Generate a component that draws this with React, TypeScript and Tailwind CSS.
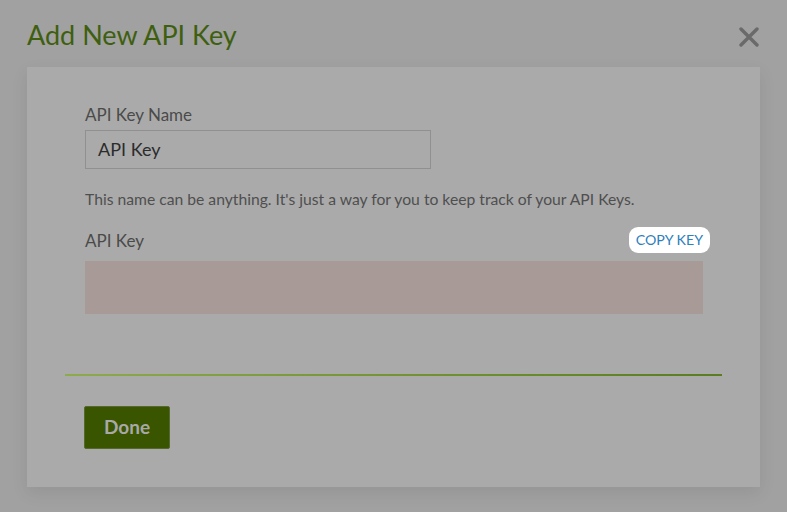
import * as React from "react";

const font = { fontFamily: "Lato, 'Open Sans', sans-serif" };

function CloseIcon() {
  return (
    <svg width="20" height="20" viewBox="0 0 20 20" className="shrink-0">
      <path
        d="M2 2 L18 18 M18 2 L2 18"
        stroke="#6a6a6a"
        strokeWidth="3.4"
        strokeLinecap="round"
      />
    </svg>
  );
}

export default function App() {
  return (
    <div
      className="w-full h-[512px] bg-[#a1a1a1] overflow-hidden pl-[27px] pr-[27px]"
      style={font}
    >
      <div className="flex items-center justify-between h-[67px]">
        <h1 className="text-[27px] leading-none text-[#3f5f10] mt-[2px]">
          Add New API Key
        </h1>
        <div className="mr-[1px] mt-[6px]">
          <CloseIcon />
        </div>
      </div>

      <div className="w-[733px] h-[420px] bg-[#aaaaaa] shadow-[0_6px_16px_rgba(0,0,0,0.08)] pt-[38px]">
        <div className="px-[58px]">
          <label className="block text-[17px] leading-[20px] text-[#4a4a4a]">
            API Key Name
          </label>
          <div className="mt-[5px] w-[346px] h-[39px] border border-[#909090] bg-[#aaaaaa] flex items-center pl-[12px] text-[18px] text-[#2c2c2c]">
            API Key
          </div>
          <p className="mt-[20px] text-[15.7px] leading-[20px] text-[#4f4f4f]">
            This name can be anything. It's just a way for you to keep track of your API Keys.
          </p>
          <div className="mt-[18px] w-[625px] h-[26px] flex items-center justify-between">
            <span className="text-[17px] text-[#4a4a4a] mt-[1px]">API Key</span>
            <button
              type="button"
              className="h-[26px] px-[7px] rounded-[9px] bg-white text-[14.2px] text-[#2f7fbd]"
              style={font}
            >
              COPY KEY
            </button>
          </div>
          <div className="mt-[8px] w-[618px] h-[53px] bg-[#a89a96]" />
        </div>

        <div className="mt-[60px] mx-[38px] h-[2px] bg-gradient-to-r from-[#8dab4c] to-[#5b7c20]" />

        <div className="px-[57px] mt-[30px]">
          <button
            type="button"
            className="w-[86px] h-[43px] rounded-[2px] border border-[#56672f] bg-[#3a5500] text-[19px] font-bold text-[#a8a8a8]"
            style={font}
          >
            Done
          </button>
        </div>
      </div>
    </div>
  );
}
